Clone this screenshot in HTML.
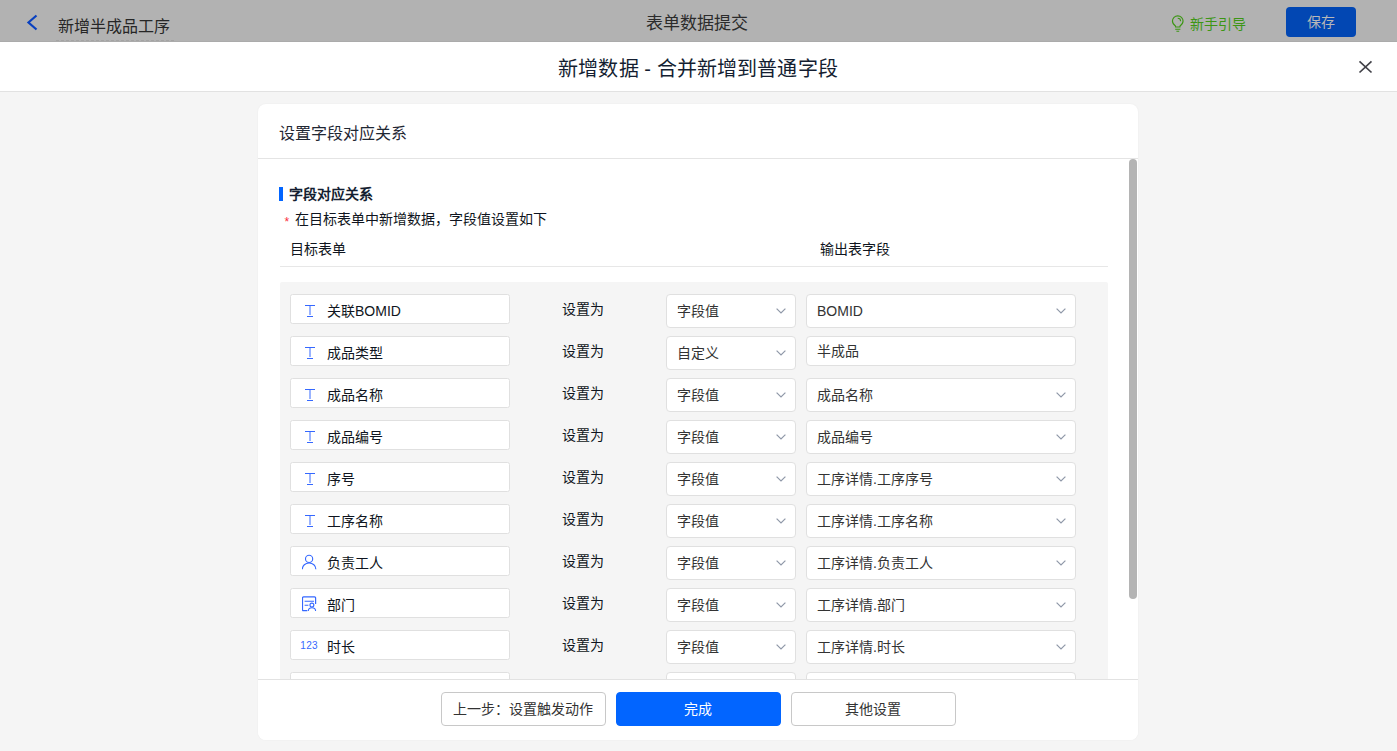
<!DOCTYPE html>
<html lang="zh-CN">
<head>
<meta charset="utf-8">
<title>表单数据提交</title>
<style>
*{box-sizing:border-box;margin:0;padding:0}
html,body{width:1397px;height:751px;overflow:hidden}
body{background:#f5f5f5;font-family:"Liberation Sans",sans-serif;font-size:14px;color:#0f1520;position:relative}
.abs{position:absolute}
/* top bar (dimmed by overlay) */
#topbar{position:absolute;left:0;top:0;width:1397px;height:42px;background:#b2b2b2;border-bottom:1px solid #ababab}
#topbar .back{position:absolute;left:26px;top:13px;width:13px;height:19px}
#topbar .name{position:absolute;left:58px;top:16px;font-size:16px;line-height:22px;color:#262626;white-space:nowrap}
#topbar .dash{position:absolute;left:56px;top:40px;width:120px;height:1px;background:repeating-linear-gradient(90deg,#a4a4a4 0,#a4a4a4 3px,transparent 3px,transparent 5px)}
#topbar .ttl{position:absolute;left:0;width:1394px;top:13px;text-align:center;font-size:17px;line-height:22px;color:#2b2b2b}
#topbar .guide{position:absolute;left:1190px;top:14px;font-size:14px;line-height:20px;color:#3c9614;white-space:nowrap}
#topbar .bulb{position:absolute;left:1170px;top:14px;width:16px;height:19px}
#topbar .save{position:absolute;left:1286px;top:7px;width:70px;height:30px;border-radius:4px;background:#0247b3;color:#b8b8b8;font-size:14px;line-height:30px;text-align:center}
/* dialog header */
#dhead{position:absolute;left:0;top:42px;width:1397px;height:50px;background:#fff;border-bottom:1px solid #e2e2e2}
#dhead .t{position:absolute;left:0;width:1396px;top:13px;text-align:center;font-size:20px;line-height:28px;color:#141e31;letter-spacing:0.12px}
#dhead .x{position:absolute;left:1358px;top:18px;width:15px;height:15px}
/* card */
#card{position:absolute;left:258px;top:104px;width:880px;height:636px;background:#fff;border-radius:8px;overflow:hidden;box-shadow:0 0 2px rgba(0,0,0,.05)}
#card .ch{position:absolute;left:0;top:0;width:880px;height:55px;border-bottom:1px solid #e4e4e4}
#card .ch span{position:absolute;left:21px;top:19px;font-size:16px;line-height:22px;color:#1f2733}
#body{position:absolute;left:0;top:55px;width:880px;height:520px;overflow:hidden}
#foot{position:absolute;left:0;top:575px;width:880px;height:61px;border-top:1px solid #e2e2e2;background:#fff}
.btn{position:absolute;top:12px;height:34px;width:165px;border:1px solid #c8c8c8;border-radius:4px;background:#fff;font-size:14px;line-height:32px;text-align:center;color:#333;padding-right:2px}
.btn.pri{background:#0265ff;border-color:#0265ff;color:#fff}
#thumb{position:absolute;left:871px;top:55px;width:8px;height:440px;border-radius:4px;background:#b4b4b4}

#body .bar{position:absolute;left:21px;top:28px;width:4px;height:14px;background:#0265ff}
#body .stitle{position:absolute;left:31px;top:25px;font-size:14px;line-height:20px;font-weight:bold;color:#141e31;white-space:nowrap}
#body .star{position:absolute;left:26.5px;top:55.5px;font-size:12px;line-height:14px;color:#fa2c3c}
#body .note{position:absolute;left:37px;top:50px;font-size:14px;line-height:20px;white-space:nowrap}
#body .h1{position:absolute;left:32px;top:80px;font-size:14px;line-height:20px;white-space:nowrap}
#body .h2{position:absolute;left:562px;top:80px;font-size:14px;line-height:20px;white-space:nowrap}
#body .hr{position:absolute;left:22px;top:107px;width:828px;height:1px;background:#e7e7e7}
#body .grey{position:absolute;left:22px;top:123px;width:828px;height:420px;background:#f5f5f5;border-radius:2px 2px 0 0}
.row{position:absolute;left:0;width:880px;height:34px}
.fi{position:absolute;left:32px;top:0;width:220px;height:30px;border:1px solid #e0e0e0;border-radius:2.5px;background:#fff}
.fi .ic{position:absolute;left:11px;top:7px;width:16px;height:16px}
.fi .n123{position:absolute;left:9.2px;top:9.4px;font-size:10px;line-height:12px;letter-spacing:0.4px;color:#3568ff}
.fi .ft{position:absolute;left:36px;top:6px;font-size:14px;line-height:20px;white-space:nowrap}
.setas{position:absolute;left:304px;top:5px;font-size:14px;line-height:20px;white-space:nowrap}
.sel{position:absolute;top:0;height:34px;border:1px solid #e0e0e0;border-radius:4px;background:#fff}
.sel.s1{left:408px;width:130px}
.sel.s2{left:548px;width:270px}
.sel.inp{height:30px}
.sel span{position:absolute;left:10px;top:6px;font-size:14px;line-height:20px;white-space:nowrap;color:#333}
.sel.inp span{top:4px}
.sel .cv{position:absolute;right:9px;top:13px;width:10px;height:6px}
</style>
</head>
<body>
<div id="topbar">
  <svg class="back" viewBox="0 0 13 19"><path d="M10.5 2.5 L2.5 9.5 L10.5 16.5" fill="none" stroke="#0840c0" stroke-width="2.2"/></svg>
  <div class="name">新增半成品工序</div>
  <div class="dash"></div>
  <div class="ttl">表单数据提交</div>
  <svg class="bulb" viewBox="0 0 16 19"><path d="M5.5 13 V11.9 C3.6 10.8 2.45 9.2 2.45 7.1 A5.3 5.3 0 0 1 13.05 7.1 C13.05 9.2 11.9 10.8 10 11.9 V13 Z" fill="none" stroke="#3c9614" stroke-width="1.15" stroke-linejoin="round"/><path d="M7.7 4.3 A2.9 2.9 0 0 1 10.6 7.2" fill="none" stroke="#3c9614" stroke-width="1.1"/><path d="M5.2 15.3H10.4M6.4 17.3H9.2" fill="none" stroke="#3c9614" stroke-width="1.1"/></svg>
  <div class="guide">新手引导</div>
  <div class="save">保存</div>
</div>
<div id="dhead">
  <div class="t">新增数据 - 合并新增到普通字段</div>
  <svg class="x" viewBox="0 0 15 15"><path d="M1.5 1.4 L13.5 12.5 M13.5 1.4 L1.5 12.5" fill="none" stroke="#414148" stroke-width="1.7"/></svg>
</div>
<div id="card">
  <div class="ch"><span>设置字段对应关系</span></div>
  <div id="body">
    <div class="bar"></div>
    <div class="stitle">字段对应关系</div>
    <div class="star">*</div>
    <div class="note">在目标表单中新增数据，字段值设置如下</div>
    <div class="h1">目标表单</div>
    <div class="h2">输出表字段</div>
    <div class="hr"></div>
    <div class="grey"></div>
<div class="row" style="top:135px">
  <div class="fi"><svg class="ic" viewBox="0 0 16 16"><path d="M3 3.5H13M8 3.5V13M5 14.5H11" fill="none" stroke="#3568ff" stroke-width="1"/></svg><span class="ft">关联BOMID</span></div>
  <div class="setas">设置为</div>
  <div class="sel s1"><span>字段值</span><svg class="cv" viewBox="0 0 10 6"><path d="M0.6 0.6L5 5L9.4 0.6" fill="none" stroke="#8f98a8" stroke-width="1.2"/></svg></div>
  <div class="sel s2"><span>BOMID</span><svg class="cv" viewBox="0 0 10 6"><path d="M0.6 0.6L5 5L9.4 0.6" fill="none" stroke="#8f98a8" stroke-width="1.2"/></svg></div>
</div>
<div class="row" style="top:177px">
  <div class="fi"><svg class="ic" viewBox="0 0 16 16"><path d="M3 3.5H13M8 3.5V13M5 14.5H11" fill="none" stroke="#3568ff" stroke-width="1"/></svg><span class="ft">成品类型</span></div>
  <div class="setas">设置为</div>
  <div class="sel s1"><span>自定义</span><svg class="cv" viewBox="0 0 10 6"><path d="M0.6 0.6L5 5L9.4 0.6" fill="none" stroke="#8f98a8" stroke-width="1.2"/></svg></div>
  <div class="sel s2 inp"><span>半成品</span></div>
</div>
<div class="row" style="top:219px">
  <div class="fi"><svg class="ic" viewBox="0 0 16 16"><path d="M3 3.5H13M8 3.5V13M5 14.5H11" fill="none" stroke="#3568ff" stroke-width="1"/></svg><span class="ft">成品名称</span></div>
  <div class="setas">设置为</div>
  <div class="sel s1"><span>字段值</span><svg class="cv" viewBox="0 0 10 6"><path d="M0.6 0.6L5 5L9.4 0.6" fill="none" stroke="#8f98a8" stroke-width="1.2"/></svg></div>
  <div class="sel s2"><span>成品名称</span><svg class="cv" viewBox="0 0 10 6"><path d="M0.6 0.6L5 5L9.4 0.6" fill="none" stroke="#8f98a8" stroke-width="1.2"/></svg></div>
</div>
<div class="row" style="top:261px">
  <div class="fi"><svg class="ic" viewBox="0 0 16 16"><path d="M3 3.5H13M8 3.5V13M5 14.5H11" fill="none" stroke="#3568ff" stroke-width="1"/></svg><span class="ft">成品编号</span></div>
  <div class="setas">设置为</div>
  <div class="sel s1"><span>字段值</span><svg class="cv" viewBox="0 0 10 6"><path d="M0.6 0.6L5 5L9.4 0.6" fill="none" stroke="#8f98a8" stroke-width="1.2"/></svg></div>
  <div class="sel s2"><span>成品编号</span><svg class="cv" viewBox="0 0 10 6"><path d="M0.6 0.6L5 5L9.4 0.6" fill="none" stroke="#8f98a8" stroke-width="1.2"/></svg></div>
</div>
<div class="row" style="top:303px">
  <div class="fi"><svg class="ic" viewBox="0 0 16 16"><path d="M3 3.5H13M8 3.5V13M5 14.5H11" fill="none" stroke="#3568ff" stroke-width="1"/></svg><span class="ft">序号</span></div>
  <div class="setas">设置为</div>
  <div class="sel s1"><span>字段值</span><svg class="cv" viewBox="0 0 10 6"><path d="M0.6 0.6L5 5L9.4 0.6" fill="none" stroke="#8f98a8" stroke-width="1.2"/></svg></div>
  <div class="sel s2"><span>工序详情.工序序号</span><svg class="cv" viewBox="0 0 10 6"><path d="M0.6 0.6L5 5L9.4 0.6" fill="none" stroke="#8f98a8" stroke-width="1.2"/></svg></div>
</div>
<div class="row" style="top:345px">
  <div class="fi"><svg class="ic" viewBox="0 0 16 16"><path d="M3 3.5H13M8 3.5V13M5 14.5H11" fill="none" stroke="#3568ff" stroke-width="1"/></svg><span class="ft">工序名称</span></div>
  <div class="setas">设置为</div>
  <div class="sel s1"><span>字段值</span><svg class="cv" viewBox="0 0 10 6"><path d="M0.6 0.6L5 5L9.4 0.6" fill="none" stroke="#8f98a8" stroke-width="1.2"/></svg></div>
  <div class="sel s2"><span>工序详情.工序名称</span><svg class="cv" viewBox="0 0 10 6"><path d="M0.6 0.6L5 5L9.4 0.6" fill="none" stroke="#8f98a8" stroke-width="1.2"/></svg></div>
</div>
<div class="row" style="top:387px">
  <div class="fi"><svg class="ic" viewBox="0 0 16 16"><circle cx="7.1" cy="4.9" r="3.6" fill="none" stroke="#3568ff" stroke-width="1.1"/><path d="M0.35 15.3C0.35 11.5 3.3 9 7.1 9S13.85 11.5 13.85 15.3" fill="none" stroke="#3568ff" stroke-width="1.1"/></svg><span class="ft">负责工人</span></div>
  <div class="setas">设置为</div>
  <div class="sel s1"><span>字段值</span><svg class="cv" viewBox="0 0 10 6"><path d="M0.6 0.6L5 5L9.4 0.6" fill="none" stroke="#8f98a8" stroke-width="1.2"/></svg></div>
  <div class="sel s2"><span>工序详情.负责工人</span><svg class="cv" viewBox="0 0 10 6"><path d="M0.6 0.6L5 5L9.4 0.6" fill="none" stroke="#8f98a8" stroke-width="1.2"/></svg></div>
</div>
<div class="row" style="top:429px">
  <div class="fi"><svg class="ic" viewBox="0 0 16 16"><path d="M13.6 8V1.9Q13.6 0.9 12.6 0.9H1.5Q0.5 0.9 0.5 1.9V13.7Q0.5 14.7 1.5 14.7H5.3" fill="none" stroke="#3568ff" stroke-width="1.2"/><path d="M2.6 5.3H12M2.6 9.3H6.4" fill="none" stroke="#3568ff" stroke-width="1.1"/><circle cx="9.9" cy="9.1" r="1.95" fill="none" stroke="#3568ff" stroke-width="1.1"/><path d="M6.3 15C6.3 12.9 7.8 11.7 9.95 11.7S13.6 12.9 13.6 15" fill="none" stroke="#3568ff" stroke-width="1.1"/></svg><span class="ft">部门</span></div>
  <div class="setas">设置为</div>
  <div class="sel s1"><span>字段值</span><svg class="cv" viewBox="0 0 10 6"><path d="M0.6 0.6L5 5L9.4 0.6" fill="none" stroke="#8f98a8" stroke-width="1.2"/></svg></div>
  <div class="sel s2"><span>工序详情.部门</span><svg class="cv" viewBox="0 0 10 6"><path d="M0.6 0.6L5 5L9.4 0.6" fill="none" stroke="#8f98a8" stroke-width="1.2"/></svg></div>
</div>
<div class="row" style="top:471px">
  <div class="fi"><span class="n123">123</span><span class="ft">时长</span></div>
  <div class="setas">设置为</div>
  <div class="sel s1"><span>字段值</span><svg class="cv" viewBox="0 0 10 6"><path d="M0.6 0.6L5 5L9.4 0.6" fill="none" stroke="#8f98a8" stroke-width="1.2"/></svg></div>
  <div class="sel s2"><span>工序详情.时长</span><svg class="cv" viewBox="0 0 10 6"><path d="M0.6 0.6L5 5L9.4 0.6" fill="none" stroke="#8f98a8" stroke-width="1.2"/></svg></div>
</div>
<div class="row" style="top:513px">
  <div class="fi"><span class="ft"></span></div>
  <div class="sel s1"><span></span></div>
  <div class="sel s2"><span></span></div>
</div>
  </div>
  <div id="thumb"></div>
  <div id="foot">
    <div class="btn" style="left:183px">上一步：设置触发动作</div>
    <div class="btn pri" style="left:358px">完成</div>
    <div class="btn" style="left:533px">其他设置</div>
  </div>
</div>
</body>
</html>
